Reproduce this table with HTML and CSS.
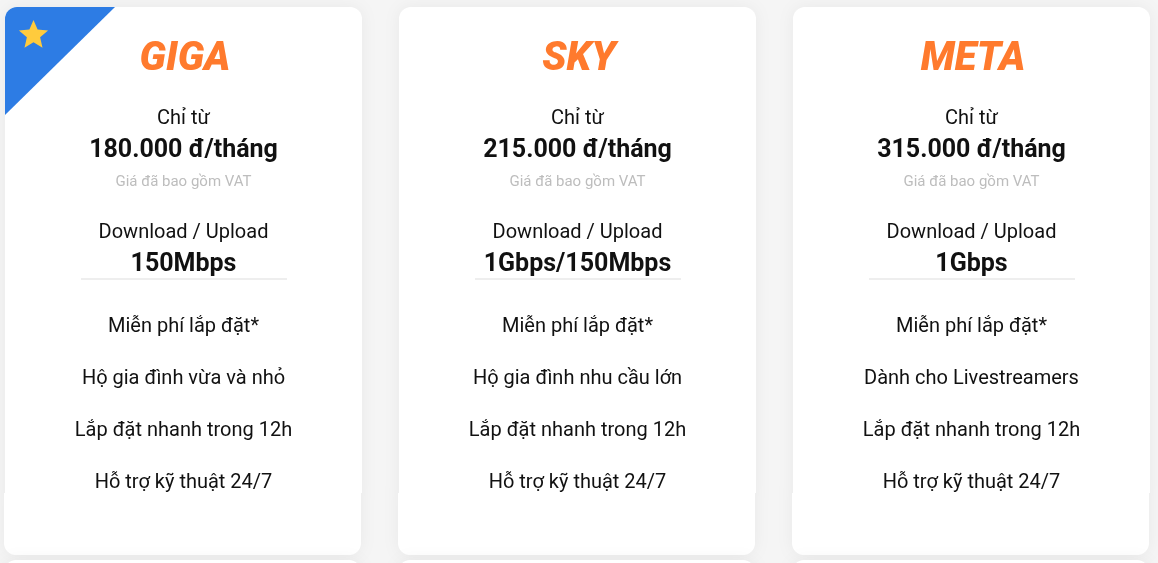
FILE: index.html
```html
<!DOCTYPE html>
<html lang="vi">
<head>
<meta charset="utf-8">
<title>Gói cước</title>
<link rel="stylesheet" href="styles.css">
</head>
<body>
<div class="plans">
  <div class="card">
    <div class="card-body">
      <div class="ribbon">
        <svg class="star" viewBox="0 0 24 24" width="35" height="35"><path fill="#ffcb3d" d="M12 17.27L18.18 21l-1.64-7.03L22 9.24l-7.19-.61L12 2 9.19 8.63 2 9.24l5.46 4.73L5.82 21z"/></svg>
      </div>
      <h2 class="title">GIGA</h2>
      <p class="from">Chỉ từ</p>
      <p class="price">180.000 đ/tháng</p>
      <p class="vat">Giá đã bao gồm VAT</p>
      <p class="speed-label">Download / Upload</p>
      <p class="speed">150Mbps</p>
      <ul class="features">
        <li>Miễn phí lắp đặt*</li>
        <li>Hộ gia đình vừa và nhỏ</li>
        <li>Lắp đặt nhanh trong 12h</li>
        <li>Hỗ trợ kỹ thuật 24/7</li>
      </ul>
    </div>
    <div class="card-foot"></div>
  </div>
  <div class="card">
    <div class="card-body">
      <h2 class="title">SKY</h2>
      <p class="from">Chỉ từ</p>
      <p class="price">215.000 đ/tháng</p>
      <p class="vat">Giá đã bao gồm VAT</p>
      <p class="speed-label">Download / Upload</p>
      <p class="speed">1Gbps/150Mbps</p>
      <ul class="features">
        <li>Miễn phí lắp đặt*</li>
        <li>Hộ gia đình nhu cầu lớn</li>
        <li>Lắp đặt nhanh trong 12h</li>
        <li>Hỗ trợ kỹ thuật 24/7</li>
      </ul>
    </div>
    <div class="card-foot"></div>
  </div>
  <div class="card">
    <div class="card-body">
      <h2 class="title">META</h2>
      <p class="from">Chỉ từ</p>
      <p class="price">315.000 đ/tháng</p>
      <p class="vat">Giá đã bao gồm VAT</p>
      <p class="speed-label">Download / Upload</p>
      <p class="speed">1Gbps</p>
      <ul class="features">
        <li>Miễn phí lắp đặt*</li>
        <li>Dành cho Livestreamers</li>
        <li>Lắp đặt nhanh trong 12h</li>
        <li>Hỗ trợ kỹ thuật 24/7</li>
      </ul>
    </div>
    <div class="card-foot"></div>
  </div>
  <div class="card card-next"></div>
  <div class="card card-next"></div>
  <div class="card card-next"></div>
</div>
</body>
</html>
```

FILE: styles.css
```css
html, body {
  margin: 0;
  padding: 0;
  background: #f5f5f5;
  font-family: Roboto, "Noto Sans", Arial, sans-serif;
  color: #111;
  overflow: hidden;
}

.plans {
  display: grid;
  grid-template-columns: repeat(3, 357px);
  column-gap: 37px;
  row-gap: 5px;
  padding: 7px 0 0 4px;
}

.card {
  display: flex;
  flex-direction: column;
  filter: drop-shadow(0 0 8px rgba(0, 0, 0, 0.05));
}

.card-body {
  position: relative;
  overflow: hidden;
  background: #fff;
  border-radius: 12px 12px 0 0;
  margin: 0 -1px 0 1px;
  padding: 26px 0 0;
  text-align: center;
  display: flex;
  flex-direction: column;
  align-items: center;
}

.card-foot {
  height: 62px;
  background: #fff;
  border-radius: 0 0 12px 12px;
}

.card-next {
  height: 120px;
  background: #fff;
  border-radius: 12px;
}

.ribbon {
  position: absolute;
  left: 0;
  top: 0;
  width: 110px;
  height: 108px;
  background: #2d7ce4;
  clip-path: polygon(0 0, 100% 0, 0 100%);
}

.star {
  position: absolute;
  left: 11px;
  top: 10px;
}

.title {
  margin: 0 0 0 3px;
  font-size: 40px;
  line-height: 48px;
  font-weight: 900;
  font-style: italic;
  color: #ff7a2d;
}

.card-body p {
  margin: 0;
}

.from {
  margin-top: 24px !important;
  font-size: 20px;
  line-height: 24px;
}

.price {
  margin-top: 5px !important;
  font-size: 25px;
  line-height: 30px;
  font-weight: 700;
}

.vat {
  margin-top: 7px !important;
  font-size: 15px;
  line-height: 20px;
  color: #bdbdbd;
}

.speed-label {
  margin-top: 28px !important;
  font-size: 20px;
  line-height: 24px;
}

.speed {
  margin-top: 5px !important;
  width: 206px;
  font-size: 25px;
  line-height: 30px;
  font-weight: 700;
  border-bottom: 2px solid #eee;
}

.features {
  list-style: none;
  margin: 33px 0 0;
  padding: 0;
  display: flex;
  flex-direction: column;
  gap: 28px;
  font-size: 20px;
  line-height: 24px;
}
```
